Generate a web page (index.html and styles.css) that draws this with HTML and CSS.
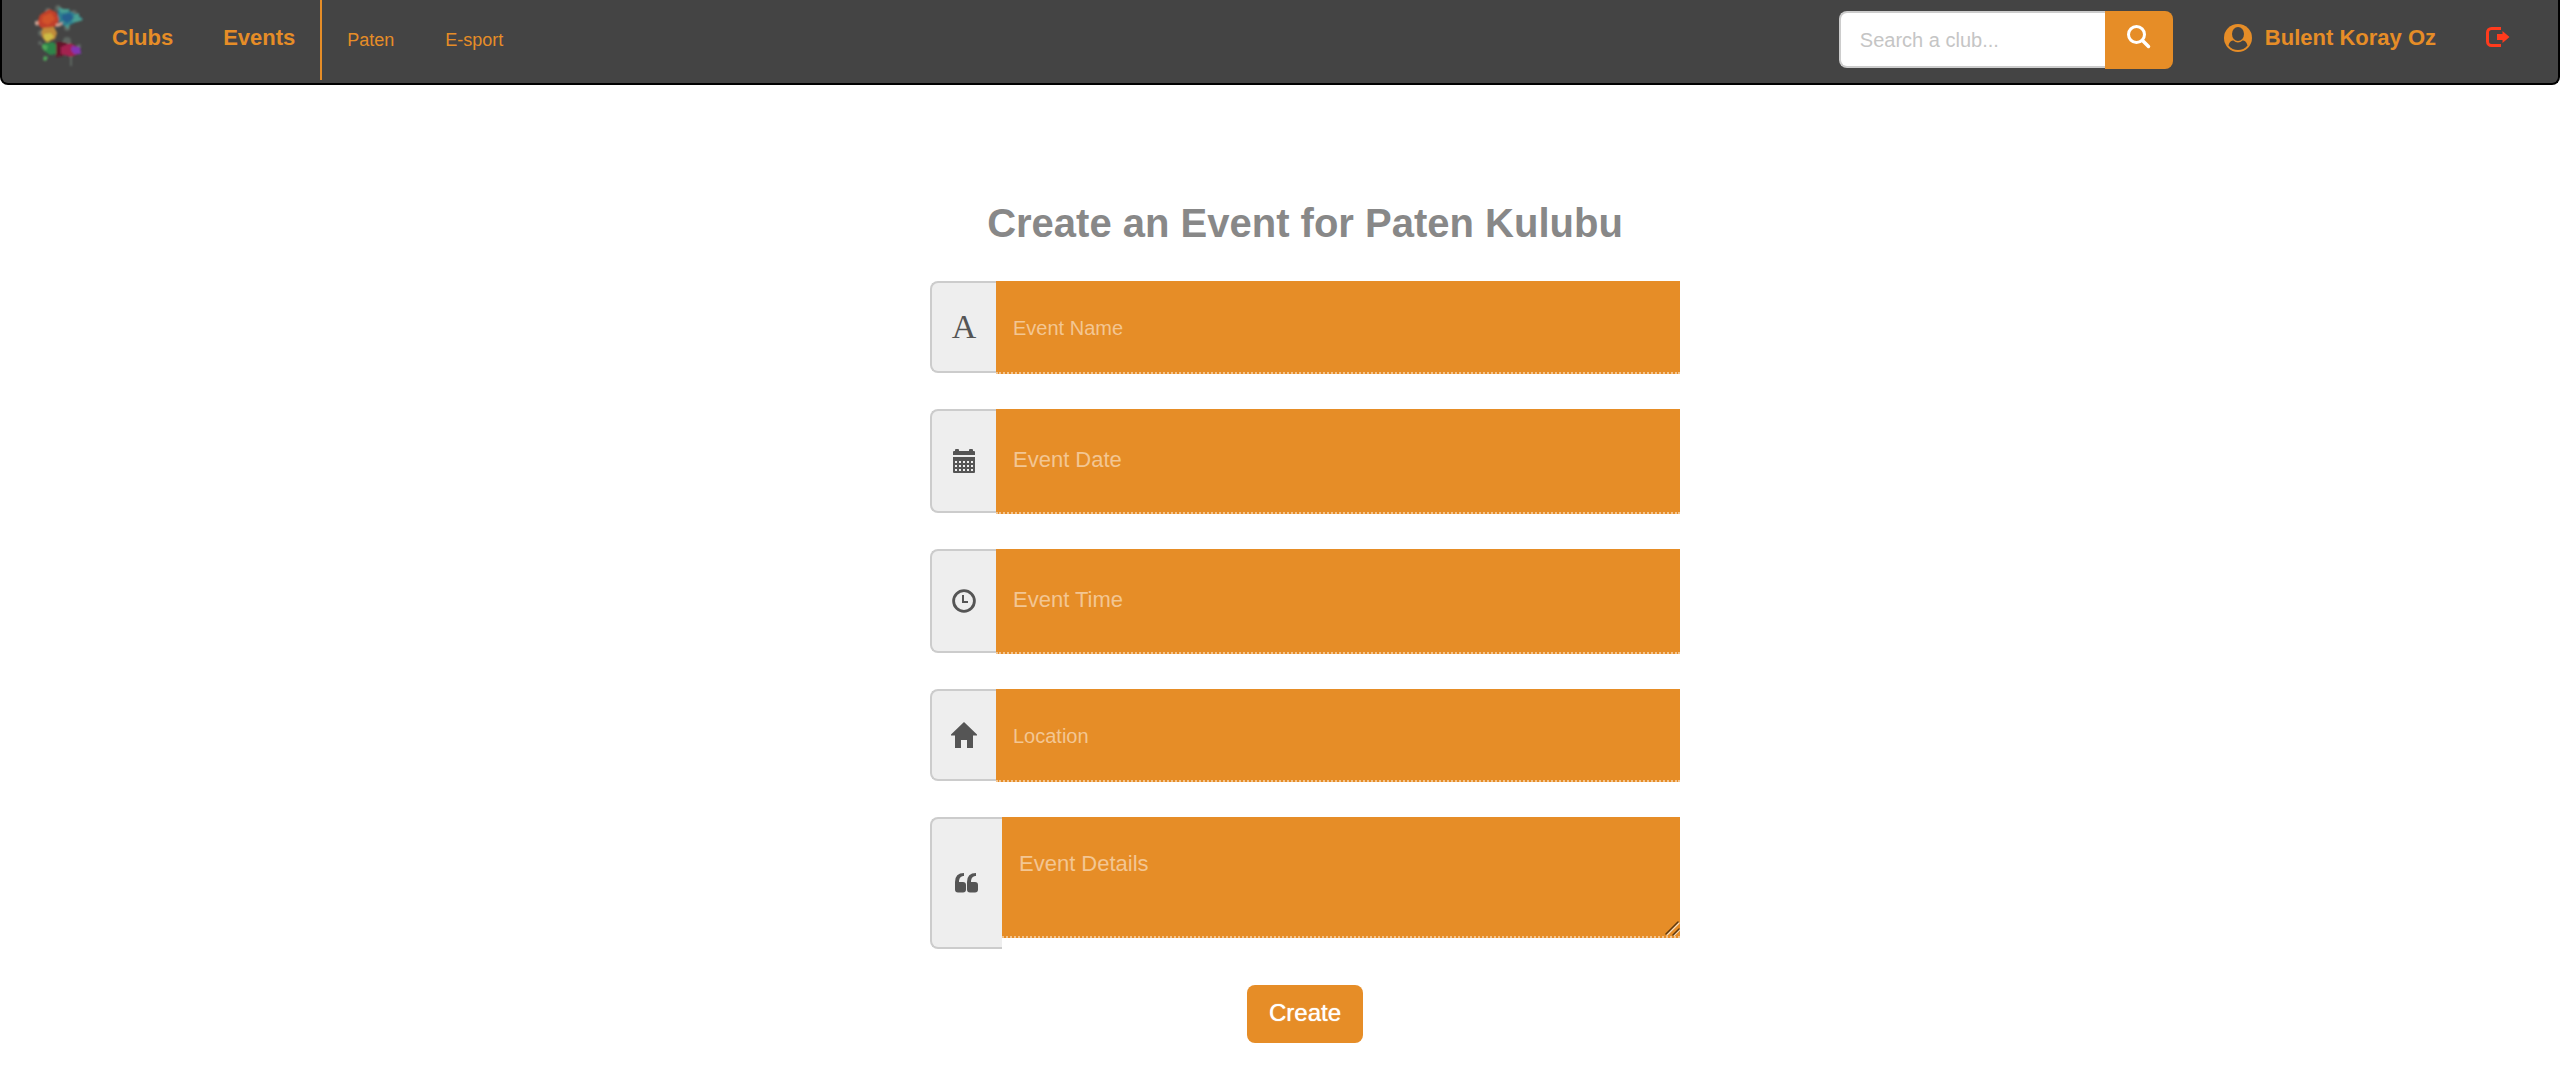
FILE: index.html
```html
<!DOCTYPE html>
<html lang="en">
<head>
<meta charset="utf-8">
<meta name="viewport" content="width=device-width, initial-scale=1">
<title>Create an Event</title>
<link rel="stylesheet" href="styles.css">
</head>
<body>
<header class="navbar">
  <nav class="nav-main" aria-label="Main">
    <a class="brand" href="#" aria-label="Home">
      <svg width="60" height="72" viewBox="0 0 60 72" aria-hidden="true">
        <defs><filter id="spray" x="-10%" y="-10%" width="120%" height="120%"><feGaussianBlur stdDeviation="0.9"/></filter></defs>
        <g filter="url(#spray)">
          <g fill="#a9c9b8" opacity=".25"><circle cx="28" cy="8" r="3"/><circle cx="18" cy="11" r="3"/><circle cx="44" cy="13" r="3"/><circle cx="37" cy="28" r="3"/><circle cx="37" cy="41" r="4"/><circle cx="49" cy="46" r="2"/><circle cx="8" cy="23" r="3"/><circle cx="11" cy="33" r="3"/><circle cx="10" cy="43" r="2"/><path d="M40 57h2v9h-2z"/></g>
          <path fill="#2f8090" d="M28 9l7 3 5-1 8 4 5 4-7 3-6 3-6 1-6-5z"/>
          <path fill="#4a9f92" d="M44 15l5-2v4l4 3-6 2-5 0zM28 7l6 2 6 0-2 3-7 1zM35 26l5-2-2 5z"/>
          <path fill="#28618f" d="M32 15l8-2 4 5-7 5-5-4z"/>
          <path fill="#c0402a" d="M10 15l9-6 7 3 3 7-2 7-8 2-8 0-4-5z"/>
          <path fill="#d2532c" d="M13 16l8-3 4 6-7 6-6-3z"/>
          <path fill="#eab5a5" opacity=".8" d="M26 24l7-2-2 4-5 1zM5 21l4 1-2 4-2-2z"/>
          <path fill="#c08b3a" d="M13 28l11-1 3 6-2 6-9 3-4-5-1-5z"/>
          <path fill="#cdbb45" d="M14 34l7-1 3 4-6 5-4-3z"/>
          <path fill="#2d8548" d="M14 43l9-1 5 4-2 8-6 1-7-5z"/>
          <path fill="#4fa85a" d="M12 44l6 2-2 5-4-3zM14 56l4 1-2 4-3-1z"/>
          <path fill="#64162a" d="M26 42l10 0 4 5-7 9-7 1 0-6z"/>
          <path fill="#a32350" d="M31 47l9-4 8 4 0 7-7 3-10-3z"/>
          <path fill="#8235b4" d="M42 46l8 1 1 7-7 0-3-4z"/>
        </g>
      </svg>
    </a>
    <a class="nav-link" href="#">Clubs</a>
    <a class="nav-link" href="#">Events</a>
    <div class="nav-clubs">
      <a class="club-link" href="#">Paten</a>
      <a class="club-link" href="#">E-sport</a>
    </div>
  </nav>
  <div class="nav-side">
    <form class="search" role="search">
      <input class="search-input" type="text" placeholder="Search a club..." aria-label="Search a club">
      <button class="search-button" type="button" aria-label="Search">
        <svg width="24" height="24" viewBox="0 0 24 24" aria-hidden="true"><circle cx="9.500" cy="9.500" r="8" fill="none" stroke="#fff" stroke-width="3"/><path d="M15.500 15.500l6 6" stroke="#fff" stroke-width="3.500" stroke-linecap="round"/></svg>
      </button>
    </form>
    <a class="user-link" href="#">
      <svg width="30" height="30" viewBox="0 0 30 30" aria-hidden="true"><circle cx="15" cy="15" r="14" fill="currentColor"/><g fill="#444"><ellipse cx="15" cy="11" rx="6" ry="7"/><path d="M5.500 22.500C6.500 18.500 8.500 17.500 10.500 17.500C13 20 17 20 19.500 17.500C21.500 17.500 23.500 18.500 24.500 22.500C20 28.500 10 28.500 5.500 22.500z"/></g></svg>
      <span>Bulent Koray Oz</span>
    </a>
    <a class="logout-link" href="#" aria-label="Log out">
      <svg width="24" height="22" viewBox="0 0 24 22" aria-hidden="true"><path d="M15 2.500H5.500a4 4 0 0 0-4 4v9a4 4 0 0 0 4 4H15" fill="none" stroke="currentColor" stroke-width="3"/><path d="M11 8h5.500V5l7 6-7 6v-3H11z" fill="currentColor"/></svg>
    </a>
  </div>
</header>
<main class="page">
  <form class="event-form">
    <h1 class="title">Create an Event for Paten Kulubu</h1>
    <div class="field">
      <label class="addon" for="event-name" aria-label="Event Name"><span class="letter">A</span></label>
      <input class="control" id="event-name" type="text" placeholder="Event Name">
    </div>
    <div class="field">
      <label class="addon" for="event-date" aria-label="Event Date">
        <svg width="22" height="24" viewBox="0 0 22 24" fill="currentColor" aria-hidden="true"><path d="M0 3q0-1 1-1h1V1q0-1 1-1h2q1 0 1 1v1h10V1q0-1 1-1h2q1 0 1 1v1h1q1 0 1 1v3H0z"/><path fill-rule="evenodd" d="M0 8h22v15q0 1-1 1H1q-1 0-1-1zM2 12v2h2v-2zm4 0v2h2v-2zm4 0v2h2v-2zm4 0v2h2v-2zm4 0v2h2v-2zM2 16v2h2v-2zm4 0v2h2v-2zm4 0v2h2v-2zm4 0v2h2v-2zm4 0v2h2v-2zM2 20v2h2v-2zm4 0v2h2v-2zm4 0v2h2v-2zm4 0v2h2v-2zm4 0v2h2v-2z"/></svg>
      </label>
      <input class="control control-large" id="event-date" type="text" placeholder="Event Date">
    </div>
    <div class="field">
      <label class="addon" for="event-time" aria-label="Event Time">
        <svg width="24" height="24" viewBox="0 0 24 24" fill="none" stroke="currentColor" aria-hidden="true"><circle cx="12" cy="12" r="10.400" stroke-width="2.800"/><path d="M11 6v7h5" stroke-width="2"/></svg>
      </label>
      <input class="control control-large" id="event-time" type="text" placeholder="Event Time">
    </div>
    <div class="field">
      <label class="addon" for="location" aria-label="Location">
        <svg width="26" height="26" viewBox="0 0 26 26" fill="currentColor" aria-hidden="true"><path d="M13 0l13 12.500v1h-4V26h-6v-8h-6v8H4V13.500H0v-1z"/></svg>
      </label>
      <input class="control" id="location" type="text" placeholder="Location">
    </div>
    <div class="field field-details">
      <label class="addon" for="details" aria-label="Event Details">
        <svg width="24" height="20" viewBox="0 0 24 20" fill="currentColor" aria-hidden="true"><path d="M9 0v3C6 3 4 5 4 9H8q3 0 3 3v4.500q0 3-3 3H3q-3 0-3-3V9Q0 0 9 0z"/><path d="M21 0v3c-3 0-5 2-5 6h4q3 0 3 3v4.500q0 3-3 3h-5q-3 0-3-3V9q0-9 9-9z"/></svg>
      </label>
      <textarea class="control control-large control-area" id="details" placeholder="Event Details"></textarea>
    </div>
    <button class="submit" type="button">Create</button>
  </form>
</main>
</body>
</html>
```
FILE: styles.css
```css
* {
  box-sizing: border-box;
}

body {
  margin: 0;
  background: #fff;
  font-family: "Liberation Sans", Arial, Helvetica, sans-serif;
}

svg {
  display: block;
}

a {
  color: #e68d27;
  text-decoration: none;
}

.navbar {
  display: flex;
  justify-content: space-between;
  height: 85px;
  padding: 0 48px 0 28px;
  background: #444;
  border: 2px solid #000;
  border-top: 0;
  border-radius: 0 0 8px 8px;
}

.nav-main {
  display: flex;
  align-items: flex-start;
}

.brand {
  margin-right: 22px;
}

.nav-link {
  margin-right: 50px;
  font-size: 22px;
  font-weight: bold;
  line-height: 76px;
}

.nav-link + .nav-clubs {
  margin-left: -25px;
}

.nav-clubs {
  display: flex;
  gap: 51px;
  height: 80px;
  padding-left: 25px;
  border-left: 2px solid #e68d27;
}

.club-link {
  font-size: 18px;
  line-height: 80px;
}

.nav-side {
  display: flex;
  align-items: flex-start;
}

.search {
  display: flex;
  margin: 11px 50px 0 0;
}

.search-input {
  width: 266px;
  height: 57px;
  padding: 2px 19px 0;
  border: 2px solid #ccc;
  border-right: 0;
  border-radius: 8px 0 0 8px;
  background: #fff;
  font: 20px "Liberation Sans", Arial, sans-serif;
}

.search-input::placeholder {
  color: #c5c5c5;
  opacity: 1;
}

.search-button {
  display: flex;
  align-items: flex-start;
  justify-content: center;
  width: 68px;
  height: 58px;
  padding: 14px 0 0;
  border: 0;
  border-radius: 0 8px 8px 0;
  background: #e68d27;
}

.user-link {
  display: flex;
  align-items: center;
  gap: 12px;
  height: 76px;
  margin-right: 50px;
  font-size: 22px;
  font-weight: bold;
}

.logout-link {
  display: flex;
  align-items: center;
  height: 74px;
  color: #ff3b1d;
}

.page {
  display: flex;
  justify-content: center;
  padding: 115px 0 31px 50px;
}

.event-form {
  display: flex;
  flex-direction: column;
  gap: 35px;
  width: 750px;
}

.title {
  margin: 0;
  color: #888;
  font-size: 40px;
  line-height: 46px;
  text-align: center;
}

.field {
  display: flex;
}

.addon {
  display: flex;
  flex: none;
  align-items: center;
  justify-content: center;
  width: 66px;
  margin-bottom: 1px;
  border: 2px solid #ccc;
  border-right: 0;
  border-radius: 8px 0 0 8px;
  background: #eee;
  color: #555;
}

.letter {
  font: 34px "Liberation Serif", "Times New Roman", serif;
}

.control {
  flex: 1;
  min-width: 0;
  height: 93px;
  padding: 4px 17px 0;
  border: 0;
  border-bottom: 2px dotted #f3c48f;
  border-radius: 0;
  background: #e68d27;
  color: #fff;
  font: 20px "Liberation Sans", Arial, sans-serif;
}

.control::placeholder {
  color: #f3c693;
  opacity: 1;
}

.control-large {
  height: 105px;
  padding: 0 17px 2px;
  font-size: 22px;
}

.field-details {
  height: 133px;
}

.field-details .addon {
  width: 72px;
}

.control-area {
  height: 121px;
  padding-top: 34px;
}

.control-area::-webkit-resizer {
  background: url("data:image/svg+xml,%3Csvg xmlns='http://www.w3.org/2000/svg' width='15' height='15' fill='none' stroke-width='1.500' stroke-linecap='round'%3E%3Cpath stroke='%23f6dcbc' d='M2 14L14 2M9 14.500L14.500 9'/%3E%3Cpath stroke='%235c3810' d='M1 13L13 1M8 14L14 8'/%3E%3C/svg%3E") no-repeat right bottom;
}

.submit {
  align-self: center;
  height: 58px;
  padding: 0 22px 2px;
  border: 0;
  border-radius: 8px;
  background: #e68d27;
  color: #fff;
  font: 24px "Liberation Sans", Arial, sans-serif;
  text-shadow: 0 0 1px #fff;
}
```
